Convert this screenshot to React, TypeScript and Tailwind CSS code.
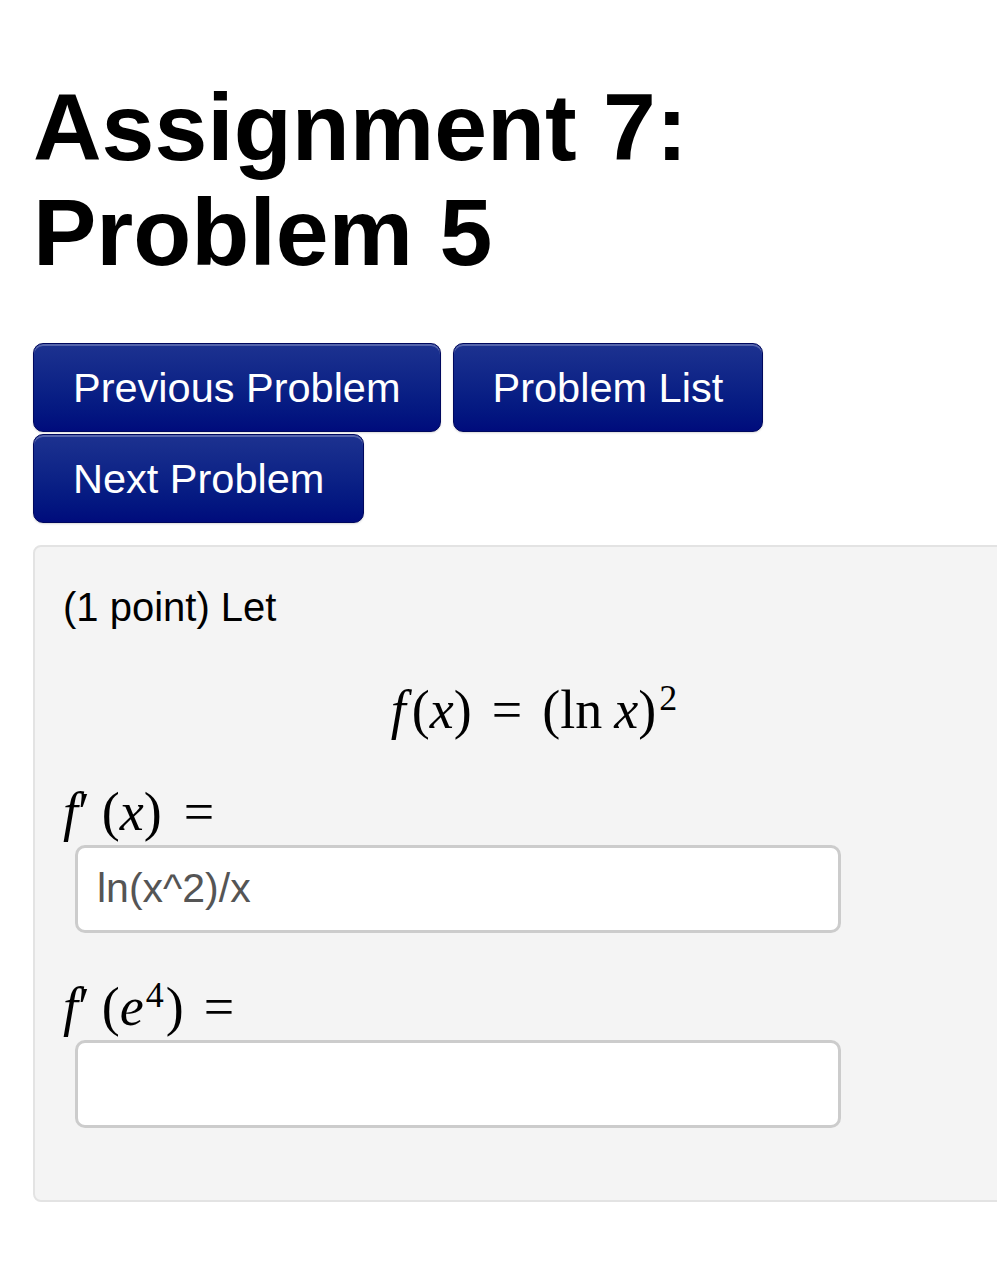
import React from "react";

const sans = "font-['Liberation_Sans','Helvetica_Neue',Arial,sans-serif]";
const serif = "font-['Liberation_Serif','Times_New_Roman',serif]";

function NavButton({ label }: { label: string }) {
  return (
    <button
      className={`${sans} h-[89px] px-[39px] rounded-[10px] border border-[#00085e] bg-gradient-to-b from-[#1d3290] to-[#000b7c] text-white text-[41.5px] leading-none shadow-[inset_0_2px_0_rgba(255,255,255,0.25),0_1px_2px_rgba(0,0,0,0.15)]`}
    >
      {label}
    </button>
  );
}

function AnswerBox({ value }: { value?: string }) {
  return (
    <div className="ml-[12px] mt-[3px] w-[766px] h-[88px] rounded-[10px] border-[3px] border-[#cccccc] bg-white flex items-center px-[19px]">
      <span className={`${sans} text-[41px] text-[#555555]`}>{value}</span>
    </div>
  );
}

export default function App() {
  return (
    <div className={`${sans} min-h-screen bg-white overflow-hidden text-black`}>
      <div className="pl-[33px] pt-[75px]">
        <h1 className="text-[95px] font-bold leading-[105px]">Assignment 7: Problem 5</h1>

        <div className="mt-[58px] flex flex-wrap gap-x-[12px] gap-y-[2px]">
          <NavButton label="Previous Problem" />
          <NavButton label="Problem List" />
          <NavButton label="Next Problem" />
        </div>

        <div className="mt-[22px] w-[1004px] rounded-[8px] border-2 border-[#e3e3e3] bg-[#f4f4f4] pl-[28px] pr-[30px] pt-[32px] pb-[72px]">
          <p className="text-[40px] leading-[57px]">(1 point) Let</p>

          {/* display equation */}
          <div className={`${serif} mt-[44px] text-center text-[54px] leading-[60px]`}>
            <i>f</i>
            <span className="ml-[6px]">(</span>
            <i>x</i>)<span className="mx-[20px]">=</span>(ln
            <span className="ml-[12px]">
              <i>x</i>
            </span>
            )<sup className="ml-[3px] text-[36px] -top-[18px]">2</sup>
          </div>

          <div className={`${serif} mt-[42px] text-[54px] leading-[60px]`}>
            <i>f</i>′<span className="ml-[12px]">(</span>
            <i>x</i>)<span className="ml-[22px]">=</span>
          </div>
          <AnswerBox value="ln(x^2)/x" />

          <div className={`${serif} mt-[44px] text-[54px] leading-[60px]`}>
            <i>f</i>′<span className="ml-[12px]">(</span>
            <i>e</i>
            <sup className="ml-[2px] text-[36px] -top-[18px]">4</sup>
            <span className="ml-[2px]">)</span>
            <span className="ml-[20px]">=</span>
          </div>
          <AnswerBox />
        </div>
      </div>
    </div>
  );
}
